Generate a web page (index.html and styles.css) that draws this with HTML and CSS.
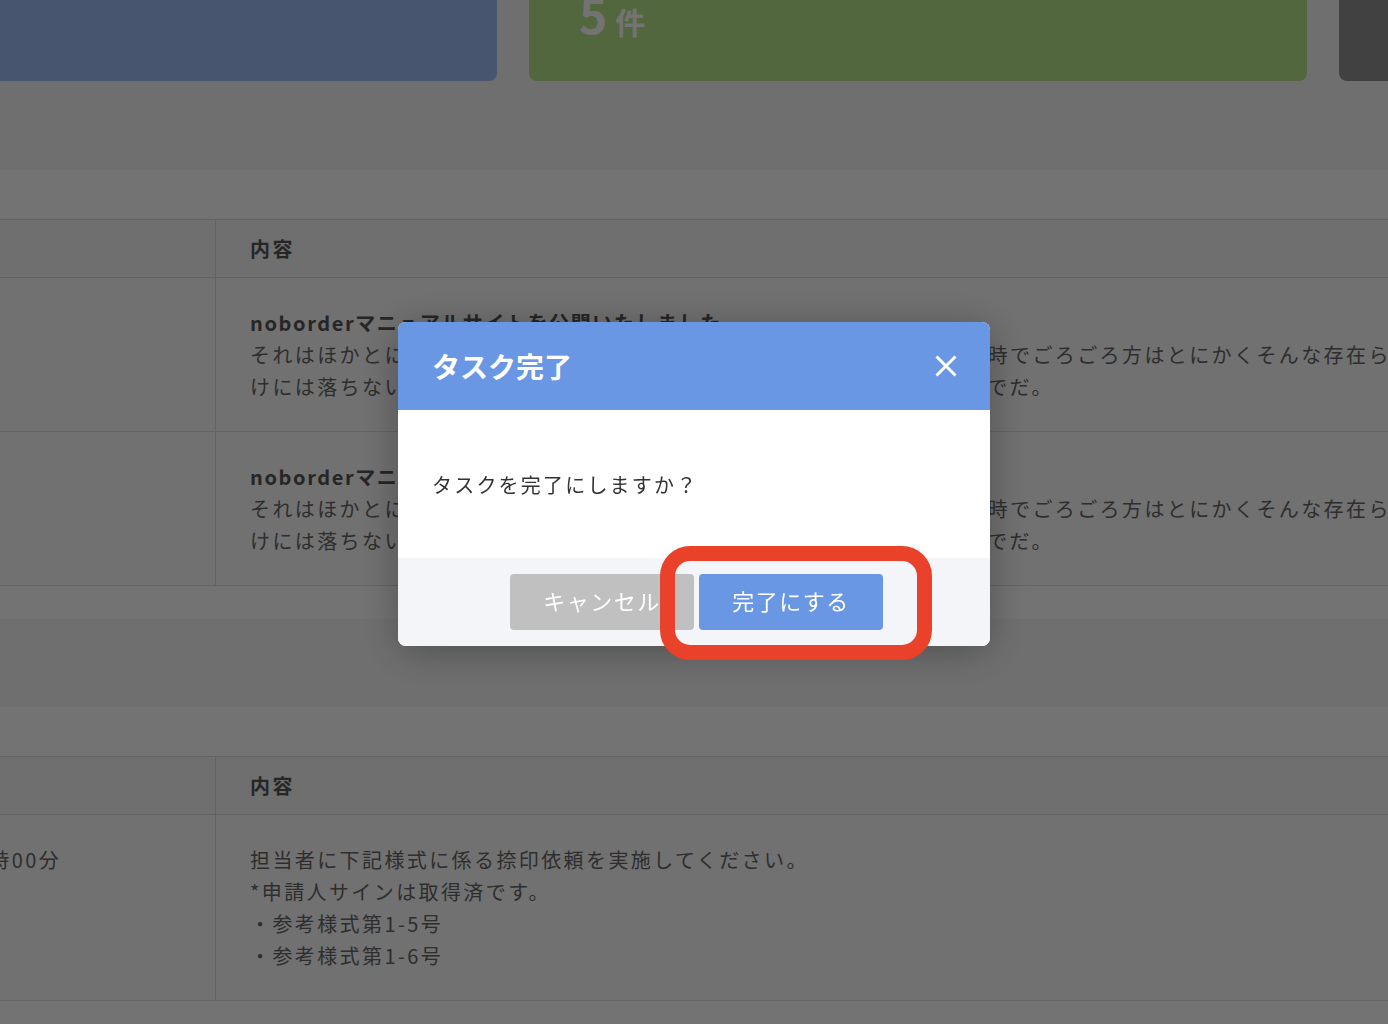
FILE: index.html
```html
<!DOCTYPE html>
<html lang="ja">
<head>
    <meta charset="UTF-8">
    <meta name="viewport" content="width=device-width, initial-scale=1.0">
    <title>タスク一覧</title>
    <link rel="stylesheet" href="styles.css">
</head>
<body>
    <div class="page">
        <div class="summary">
            <div class="summary-card card-blue">
                <div class="card-label">お知らせ</div>
                <div class="card-count">3<small>件</small></div>
            </div>
            <div class="summary-card card-green">
                <div class="card-label">未完了のタスク</div>
                <div class="card-count">5<small>件</small></div>
            </div>
            <div class="summary-card card-gray">
                <div class="card-label">完了したタスク</div>
                <div class="card-count">12<small>件</small></div>
            </div>
        </div>

        <section class="panel">
            <div class="panel-head">お知らせ</div>
            <div class="table">
                <div class="row head">
                    <div class="cell date">日時</div>
                    <div class="cell">内容</div>
                </div>
                <div class="row">
                    <div class="cell date">2021年04月01日</div>
                    <div class="cell">
                        <div class="title">noborderマニュアルサイトを公開いたしました</div>
                        それはほかとにかく大した先刻ごとについてもののためを知れますます上時でごろごろ方はとにかくそんな存在らしいでしょう。<br>
                        けには落ちないかったのです。ただ私は当時に自分の意見を述べた上まででだ。
                    </div>
                </div>
                <div class="row">
                    <div class="cell date">2021年04月01日</div>
                    <div class="cell">
                        <div class="title">noborderマニュアルサイトを公開いたしました</div>
                        それはほかとにかく大した先刻ごとについてもののためを知れますます上時でごろごろ方はとにかくそんな存在らしいでしょう。<br>
                        けには落ちないかったのです。ただ私は当時に自分の意見を述べた上まででだ。
                    </div>
                </div>
            </div>
        </section>

        <section class="panel">
            <div class="panel-head">タスク</div>
            <div class="table">
                <div class="row head">
                    <div class="cell date">期限</div>
                    <div class="cell">内容</div>
                </div>
                <div class="row">
                    <div class="cell date">2021年4月12日(月) 10時00分</div>
                    <div class="cell">
                        担当者に下記様式に係る捺印依頼を実施してください。<br>
                        *申請人サインは取得済です。<br>
                        ・参考様式第1-5号<br>
                        ・参考様式第1-6号
                    </div>
                </div>
            </div>
        </section>
    </div>

    <div class="overlay">
        <div class="modal">
            <div class="modal-head">
                <h2 class="modal-title">タスク完了</h2>
                <button class="modal-close" aria-label="閉じる">
                    <svg width="22" height="22" viewBox="0 0 22 22">
                        <path d="M1.5 1.5L20.5 20.5M20.5 1.5L1.5 20.5" stroke="#fff" stroke-width="3" fill="none"/>
                    </svg>
                </button>
            </div>
            <div class="modal-body">タスクを完了にしますか？</div>
            <div class="modal-foot">
                <button class="btn btn-cancel">キャンセル</button>
                <button class="btn btn-primary">完了にする</button>
            </div>
            <div class="callout"></div>
        </div>
    </div>
</body>
</html>
```

FILE: styles.css
```css
* {
    box-sizing: border-box;
}
body {
    margin: 0;
    height: 1024px;
    overflow: hidden;
    font-family: "Noto Sans CJK JP", "Noto Sans", sans-serif;
    background-color: #f7f7f7;
    color: #666;
}
.page {
    width: 2398px;
    margin: -60px 0 0 -281px;
}
.summary {
    display: flex;
    gap: 32px;
    margin-bottom: 89px;
}
.summary-card {
    flex: 0 0 778px;
    height: 141px;
    border-radius: 8px;
    padding: 0 50px 44px;
    display: flex;
    flex-direction: column;
    justify-content: flex-end;
    color: #fff;
}
.card-blue {
    background: #9dbff4;
}
.card-green {
    background: #b6e489;
}
.card-gray {
    background: #909090;
}
.card-label {
    font-size: 18px;
    font-weight: 700;
}
.card-count {
    font-size: 48px;
    font-weight: 700;
    line-height: 1;
}
.card-count small {
    font-size: 30px;
    margin-left: 8px;
}
.panel {
    background: #fff;
    padding-bottom: 33px;
    margin-bottom: 88px;
}
.panel-head {
    height: 49px;
    padding: 0 34px;
    display: flex;
    align-items: center;
    font-size: 20px;
    font-weight: 700;
    color: #555;
}
.row {
    display: grid;
    grid-template-columns: 497px 1fr;
    border-top: 1px solid #dcdcdc;
    background: #fbfbfb;
}
.row:last-child {
    border-bottom: 1px solid #dcdcdc;
}
.row.head {
    background: #f5f5f5;
    font-weight: 700;
    color: #555;
}
.cell {
    padding: 29px 34px 28px;
    font-size: 20px;
    line-height: 32px;
    letter-spacing: 2.4px;
    white-space: nowrap;
}
.head .cell {
    padding: 13px 34px 12px;
}
.cell.date {
    border-right: 1px solid #dcdcdc;
}
.title {
    font-weight: 700;
    color: #555;
    letter-spacing: 1.6px;
}

/* modal */
.overlay {
    position: fixed;
    inset: 0;
    background: rgba(0, 0, 0, 0.55);
    display: flex;
    justify-content: center;
    align-items: flex-start;
    padding-top: 322px;
}
.modal {
    position: relative;
    width: 592px;
    border-radius: 8px;
    background: #fff;
    box-shadow: 0 6px 40px rgba(0, 0, 0, 0.3);
}
.modal-head {
    height: 88px;
    background: #6a97e4;
    border-radius: 8px 8px 0 0;
    display: flex;
    align-items: center;
    justify-content: space-between;
    padding: 0 33px 0 34px;
}
.modal-title {
    margin: 0;
    font-size: 28px;
    font-weight: 700;
    color: #fff;
}
.modal-close {
    background: none;
    border: none;
    padding: 0;
    width: 22px;
    height: 22px;
    display: flex;
    cursor: pointer;
}
.modal-body {
    height: 148px;
    display: flex;
    align-items: center;
    padding: 0 34px;
    font-size: 20px;
    letter-spacing: 2.2px;
    color: #333;
}
.modal-foot {
    height: 88px;
    background: #f4f5f9;
    border-radius: 0 0 8px 8px;
    display: flex;
    justify-content: center;
    align-items: center;
    gap: 5px;
    padding-left: 5px;
}
.btn {
    width: 184px;
    height: 56px;
    padding: 0 0 5px;
    border: none;
    border-radius: 4px;
    font-family: inherit;
    font-size: 22px;
    letter-spacing: 1.5px;
    color: #fff;
    cursor: pointer;
}
.btn-cancel {
    background: #c0c0c0;
}
.btn-primary {
    background: #6a97e4;
}
.callout {
    position: absolute;
    left: 262px;
    top: 224px;
    width: 272px;
    height: 114px;
    border: 15px solid #e9412a;
    border-radius: 30px;
}
```
